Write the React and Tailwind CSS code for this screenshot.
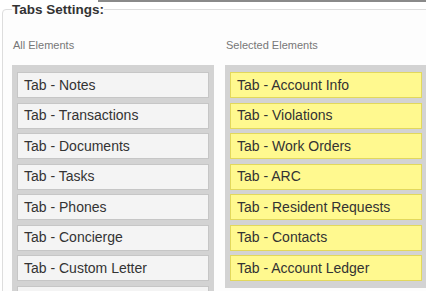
const allElements = [
  "Tab - Notes",
  "Tab - Transactions",
  "Tab - Documents",
  "Tab - Tasks",
  "Tab - Phones",
  "Tab - Concierge",
  "Tab - Custom Letter",
  "",
];

const selectedElements = [
  "Tab - Account Info",
  "Tab - Violations",
  "Tab - Work Orders",
  "Tab - ARC",
  "Tab - Resident Requests",
  "Tab - Contacts",
  "Tab - Account Ledger",
];

function ElementList({ title, items, selected }) {
  return (
    <div className="w-[202px] shrink-0">
      <p className="text-[11px] leading-[13px] text-[#777] mb-[13px] pl-[1px]">{title}</p>
      <div className="bg-[#d3d3d3] px-[5px] pt-[7px] pb-[7px] flex flex-col gap-[4.5px]">
        {items.map((item, i) => (
          <div
            key={i}
            className={`h-[26px] flex items-center pl-[6px] text-[14px] text-[#333] border ${
              selected
                ? "bg-[#fff98f] border-[#e2d85c]"
                : "bg-[#f4f4f4] border-[#c6c6c6]"
            }`}
          >
            {item}
          </div>
        ))}
      </div>
    </div>
  );
}

export default function App() {
  return (
    <div className="relative h-[291px] overflow-hidden bg-white font-['Liberation_Sans',Arial,sans-serif]">
      <div className="absolute top-0 left-[98px] right-0 h-[2px] bg-[#8a8a8a]" />
      <fieldset className="mt-[2px] ml-[2px] w-[450px] border border-[#dddddd] rounded-tl-[4px] bg-[#fdfdfd] px-[9px]">
        <legend className="text-[13.5px] leading-[15px] font-bold text-[#333]">Tabs Settings:</legend>
        <div className="flex gap-[11px] pt-[22px]">
          <ElementList title="All Elements" items={allElements} />
          <ElementList title="Selected Elements" items={selectedElements} selected />
        </div>
      </fieldset>
    </div>
  );
}
